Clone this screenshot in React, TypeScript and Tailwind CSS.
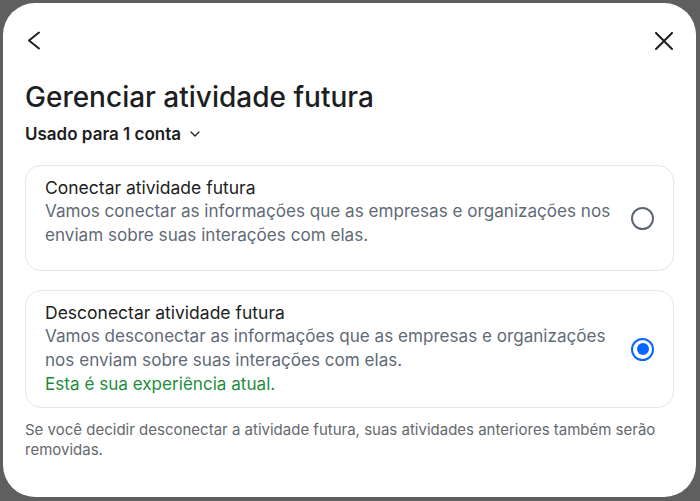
import { useState } from "react"

const options = [
  {
    id: "connect",
    title: "Conectar atividade futura",
    description:
      "Vamos conectar as informações que as empresas e organizações nos enviam sobre suas interações com elas.",
  },
  {
    id: "disconnect",
    title: "Desconectar atividade futura",
    description:
      "Vamos desconectar as informações que as empresas e organizações nos enviam sobre suas interações com elas.",
    note: "Esta é sua experiência atual.",
  },
]

function Radio({ checked }: { checked: boolean }) {
  if (checked) {
    return (
      <span className="flex h-[23px] w-[23px] shrink-0 items-center justify-center rounded-full border-[2.5px] border-[#0866ff]">
        <span className="h-[12px] w-[12px] rounded-full bg-[#0866ff]" />
      </span>
    )
  }
  return <span className="h-[23px] w-[23px] shrink-0 rounded-full border-2 border-[#5d6671]" />
}

export default function App() {
  const [selected, setSelected] = useState("disconnect")

  return (
    <div className="h-[501px] w-[700px] bg-[#5f5f5f] pb-[4px] pl-[3px] pr-[4px] pt-[3px] font-['Inter',sans-serif]">
      <div className="flex h-full flex-col rounded-[32px] bg-white px-[22px]">
        <div className="flex items-center justify-between pt-[28px]">
          <button className="flex h-[19px] w-[16px] items-center">
            <svg width="16" height="19" viewBox="0 0 16 19" fill="none">
              <path d="M14 1.5 4 9.5l10 8" stroke="#1c1e21" strokeWidth="2" strokeLinecap="round" strokeLinejoin="round" />
            </svg>
          </button>
          <button className="flex h-[18px] w-[20px] items-center justify-center">
            <svg width="20" height="18" viewBox="0 0 20 18" fill="none">
              <path d="M2 1l16 16M18 1 2 17" stroke="#1c1e21" strokeWidth="2" strokeLinecap="round" />
            </svg>
          </button>
        </div>

        <h1 className="mt-[30px] text-[28px] leading-[34px] font-medium text-[#1c1e21]">
          Gerenciar atividade futura
        </h1>

        <button className="mt-[9px] flex items-center gap-[9px] text-[17px] leading-[22px] font-semibold text-[#1c1e21]">
          Usado para 1 conta
          <svg width="10" height="6" viewBox="0 0 10 6" fill="none">
            <path d="M1 1l4 4 4-4" stroke="#1c1e21" strokeWidth="1.3" strokeLinecap="round" strokeLinejoin="round" />
          </svg>
        </button>

        <div className="mt-[20px] flex flex-col gap-[19px]">
          {options.map((o) => (
            <label
              key={o.id}
              onClick={() => setSelected(o.id)}
              className="flex cursor-pointer items-center gap-[12px] rounded-[16px] border border-[#e4e6eb] pb-[11px] pl-[19px] pr-[19px] pt-[11px]"
            >
              <div className="flex-1">
                <div className="text-[17.5px] leading-[22px] text-[#1c1e21]">{o.title}</div>
                <div className="text-[17.1px] leading-[24px] text-[#5f6a77]">{o.description}</div>
                {o.note ? (
                  <div className="text-[17.1px] leading-[24px] text-[#1e8c3c]">{o.note}</div>
                ) : (
                  <div className="h-[12px]" />
                )}
              </div>
              <Radio checked={selected === o.id} />
            </label>
          ))}
        </div>

        <p className="mt-[12px] text-[15px] leading-[20px] text-[#65686c]">
          Se você decidir desconectar a atividade futura, suas atividades anteriores também serão removidas.
        </p>
      </div>
    </div>
  )
}
